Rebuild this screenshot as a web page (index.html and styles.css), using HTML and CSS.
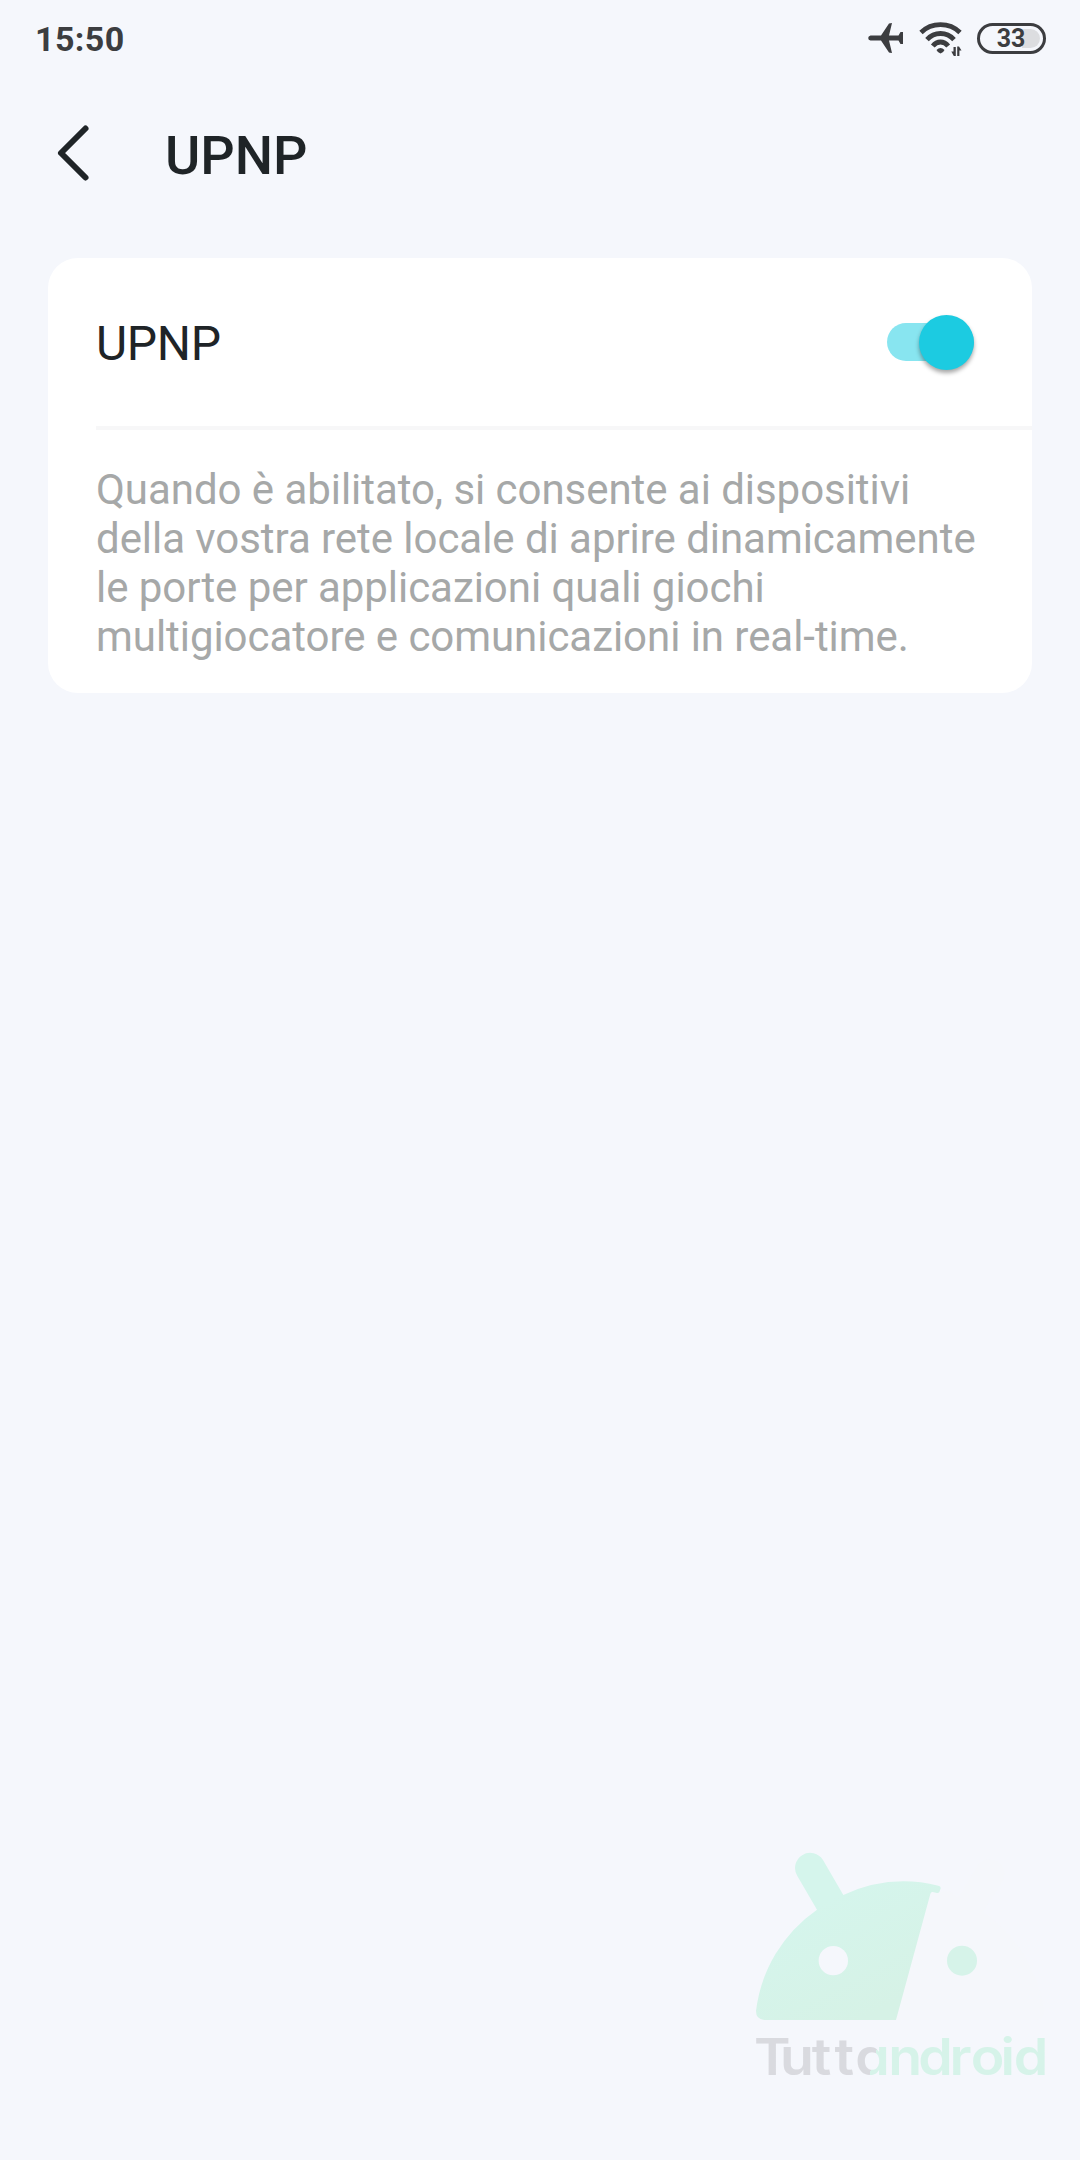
FILE: index.html
```html
<!DOCTYPE html>
<html lang="it">
<head>
    <meta charset="UTF-8">
    <meta name="viewport" content="width=device-width, initial-scale=1.0">
    <title>UPNP</title>
    <link rel="stylesheet" href="styles.css">
</head>
<body>
    <div class="status-bar">
        <span class="clock">15:50</span>
        <div class="status-icons">
            <svg class="icon-plane" viewBox="0 0 36 32">
                <path d="M2.5 13.4H13L21 1.400Q21.500 1 24 1L21 13.4H30.5L32.5 10H35V22H32.5L30.5 18.6H21L24 31Q21.500 31 21 30.6L13 18.6H2.5Q0.200 18 0.200 16T2.5 13.4Z"/>
            </svg>
            <svg class="icon-wifi" viewBox="0 0 43 34">
                <path class="wave" d="M2 11.5Q10 3.700 21.500 3.700T41 11.5M8 18.6Q13.500 12.500 21.500 12.500T35 18.600M13.800 25Q17 21 21.500 21T29.200 25"/>
                <path d="M17.500 29Q21.500 25 25.500 29Q24.500 31.500 21.500 32.500Q18.500 31.500 17.500 29Z"/>
                <path d="M36.800 26V35H34.800L32.300 30.500H34.500V26ZM38.200 35V25.500H40L42.500 29.500H40.400V35Z"/>
            </svg>
            <div class="battery"><div class="battery-level"></div><span>33</span></div>
        </div>
    </div>

    <div class="header">
        <svg class="back" viewBox="0 0 36 60">
            <path d="M29.500 5.500L5 30L29.500 54.500"/>
        </svg>
        <h1>UPNP</h1>
    </div>

    <div class="card">
        <div class="row">
            <label>UPNP</label>
            <div class="switch"><div class="thumb"></div></div>
        </div>
        <p class="description">Quando è abilitato, si consente ai dispositivi della vostra rete locale di aprire dinamicamente le porte per applicazioni quali giochi multigiocatore e comunicazioni in real-time.</p>
    </div>

    <svg class="watermark" viewBox="0 0 1080 960">
        <defs>
            <linearGradient id="head" gradientUnits="userSpaceOnUse" x1="250" y1="280" x2="420" y2="600">
                <stop offset="0" stop-color="#d5f5ec"/>
                <stop offset="1" stop-color="#d6f2e6"/>
            </linearGradient>
            <!-- slanted colour change inside the "a" -->
            <linearGradient id="name" gradientUnits="userSpaceOnUse" x1="414" y1="720" x2="424" y2="722.600">
                <stop offset="0.500" stop-color="#d9dadf"/>
                <stop offset="0.500" stop-color="#d6f3e9"/>
            </linearGradient>
        </defs>
        <path class="head-right" d="M528 600L632 218L690 214L715 235L773 135A45 45 0 0 1 850 180L789 275A433 433 0 0 1 973 578Q970 600 948 600Z"/>
        <path fill="url(#head)" d="M133 600Q108 598 108 573A433 433 0 0 1 291 269L232 168A45 45 0 0 1 309 120L370 225A433 433 0 0 1 655 197Q663 199 662 205L659 214Q658 220 651 219L638 216Q633 215 631 222L528 600Z"/>
        <circle class="eye-left" cx="340" cy="422" r="44"/>
        <circle class="eye-right" cx="726" cy="422" r="45"/>
        <text class="brand" transform="scale(1.1 1)" x="93 164 250 312 369 459 541 626 684 765 801" y="765" fill="url(#name)">Tuttandroid</text>
    </svg>
</body>
</html>
```
FILE: styles.css
```css
body {
    font-family: Roboto, "Liberation Sans", sans-serif;
    margin: 0;
    min-height: 2160px;
    background-color: #f5f7fc;
    color: #1f2427;
    position: relative;
}

.status-bar {
    display: flex;
    justify-content: space-between;
    align-items: center;
    height: 76px;
    padding: 0 34px 0 35px;
    box-sizing: border-box;
    color: #3c3d40;
}

.clock {
    font-size: 34px;
    font-weight: bold;
    letter-spacing: 0.4px;
    padding-top: 2px;
}

.status-icons {
    display: flex;
    align-items: center;
}

.status-icons svg {
    fill: #3c3d40;
    overflow: visible;
}

.icon-plane {
    width: 36px;
    height: 32px;
    margin-right: 15px;
}

.icon-wifi {
    width: 43px;
    height: 34px;
    margin-right: 15px;
}

.icon-wifi .wave {
    fill: none;
    stroke: #3c3d40;
    stroke-width: 4.8;
}

.battery {
    display: flex;
    align-items: center;
    justify-content: center;
    width: 69px;
    height: 31px;
    box-sizing: border-box;
    border: 3px solid #3c3d40;
    border-radius: 16px;
    position: relative;
    font-size: 25px;
    font-weight: bold;
}

.battery-level {
    position: absolute;
    top: 3px;
    right: 3px;
    width: 18px;
    height: 19px;
    background-color: #dcdde0;
    border-radius: 0 10px 10px 0;
}

.battery span {
    position: relative;
    padding-right: 1px;
}

.header {
    display: flex;
    align-items: center;
    height: 154px;
    padding-left: 56px;
}

.back {
    width: 36px;
    height: 60px;
    fill: none;
    stroke: #1f2427;
    stroke-width: 6;
    stroke-linecap: round;
    stroke-linejoin: round;
}

h1 {
    margin: 4px 0 0 73px;
    font-size: 54px;
    font-weight: 500;
}

.card {
    margin: 28px 48px 0;
    height: 435px;
    background-color: #fff;
    border-radius: 30px;
}

.row {
    display: flex;
    justify-content: space-between;
    align-items: center;
    height: 168px;
    margin-left: 48px;
    padding-right: 58px;
    border-bottom: 4px solid #f7f7f8;
}

label {
    font-size: 48px;
    letter-spacing: -0.3px;
    padding-top: 2px;
}

.switch {
    display: flex;
    justify-content: flex-end;
    align-items: center;
    width: 87px;
    height: 38px;
    background-color: #88e5f0;
    border-radius: 19px;
}

.thumb {
    flex: none;
    width: 55px;
    height: 55px;
    border-radius: 50%;
    background-color: #1ccbe1;
    box-shadow: 0 3px 4px rgba(0, 0, 0, 0.35);
}

.description {
    margin: 0;
    padding: 35px 50px 0 48px;
    font-size: 42px;
    line-height: 49px;
    letter-spacing: -0.05px;
    color: #a6a8a8;
}

.watermark {
    position: absolute;
    right: 0;
    bottom: 20px;
    width: 360px;
    height: 320px;
}

.head-right {
    fill: #f5f7fb;
}

.eye-left {
    fill: #f5f7fc;
}

.eye-right {
    fill: #d6f3e9;
}

.brand {
    font-family: Inter, sans-serif;
    font-size: 151px;
    font-weight: 600;
    font-feature-settings: "cv11";
}
```
